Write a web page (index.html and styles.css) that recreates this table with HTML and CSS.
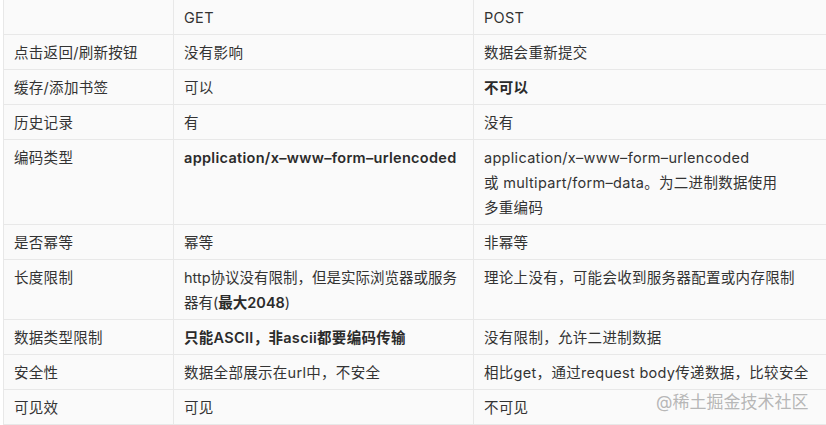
FILE: index.html
```html
<!DOCTYPE html>
<html lang="zh-CN">
<head>
<meta charset="utf-8">
<link rel="stylesheet" href="styles.css">
</head>
<body>
<div class="page">
<table class="cmp">
  <colgroup><col class="c1"><col class="c2"><col class="c3"></colgroup>
  <tr class="head"><td></td><td>GET</td><td>POST</td></tr>
  <tr><td>点击返回/刷新按钮</td><td>没有影响</td><td>数据会重新提交</td></tr>
  <tr><td>缓存/添加书签</td><td>可以</td><td><b>不可以</b></td></tr>
  <tr><td>历史记录</td><td>有</td><td>没有</td></tr>
  <tr><td>编码类型</td><td><b>application/x–www–form–urlencoded</b></td><td>application/x–www–form–urlencoded<br>或 multipart/form–data。为二进制数据使用<br>多重编码</td></tr>
  <tr><td>是否幂等</td><td>幂等</td><td>非幂等</td></tr>
  <tr><td>长度限制</td><td class="tight">http协议没有限制，但是实际浏览器或服务<br>器有(<b>最大2048</b>)</td><td>理论上没有，可能会收到服务器配置或内存限制</td></tr>
  <tr><td>数据类型限制</td><td><b>只能ASCII，非ascii都要编码传输</b></td><td>没有限制，允许二进制数据</td></tr>
  <tr><td>安全性</td><td>数据全部展示在url中，不安全</td><td>相比get，通过request body传递数据，比较安全</td></tr>
  <tr><td>可见效</td><td>可见</td><td>不可见</td></tr>
</table>
<div class="mark">@稀土掘金技术社区</div>
</div>
</body>
</html>
```
FILE: styles.css
```css
html, body {
  margin: 0;
  padding: 0;
  background: #ffffff;
  overflow: hidden;
  width: 826px;
  height: 425px;
}
.page {
  position: relative;
  padding-left: 3px;
  font-family: "Inter", "Noto Sans CJK SC", sans-serif;
  font-size: 14.5px;
  letter-spacing: 0.3px;
  color: #333333;
}
.cmp {
  border-collapse: collapse;
  table-layout: fixed;
  width: 840px;
  margin-top: -1px;
  background: #fafafa;
}
.c1 { width: 170px; }
.c2 { width: 300px; }
.c3 { width: 370px; }
.cmp td {
  border: 1px solid #e8e8e8;
  padding: 5px 10px 4px 10px;
  line-height: 25px;
  vertical-align: top;
  word-break: break-all;
}
.cmp td.tight {
  letter-spacing: 0;
  padding-right: 4px;
}
.cmp tr.head td {
  padding-top: 5px;
  padding-bottom: 4px;
}
.cmp b {
  font-weight: 600;
  color: #2b2b2b;
}
.mark {
  position: absolute;
  left: 656px;
  top: 389px;
  font-size: 17px;
  letter-spacing: 0;
  white-space: nowrap;
  color: rgba(165, 165, 165, 0.8);
}
```
